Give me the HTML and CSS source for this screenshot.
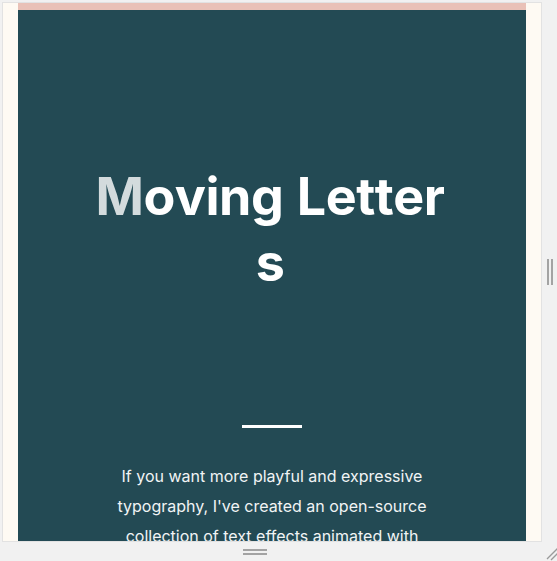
FILE: index.html
```html
<!DOCTYPE html>
<html lang="en">
<head>
<meta charset="utf-8">
<title>Moving Letters</title>
<link rel="stylesheet" href="styles.css">
</head>
<body>
<div class="shell">
  <div class="frame">
    <section class="panel">
      <h1 class="title"><span class="ch dim">M</span><span class="ch">o</span><span class="ch">v</span><span class="ch">i</span><span class="ch">n</span><span class="ch">g</span><span class="ch sp"> </span><span class="ch">L</span><span class="ch">e</span><span class="ch">t</span><span class="ch">t</span><span class="ch">e</span><span class="ch">r</span><span class="ch">s</span></h1>
      <hr class="rule">
      <p class="lead">If you want more playful and expressive typography, I've created an open-source collection of text effects animated with anime.js.</p>
    </section>
  </div>
  <div class="side">
    <span class="vgrip"></span>
  </div>
  <div class="bottom">
    <span class="hgrip"></span>
  </div>
  <div class="corner">
    <svg width="15" height="16" viewBox="0 0 15 16"><path d="M14 3 L3 14 M14 8 L7 15" stroke="#9a9a9a" stroke-width="1.3" fill="none"/></svg>
  </div>
</div>
</body>
</html>
```

FILE: styles.css
```css
html, body {
  margin: 0;
  padding: 0;
  background: #f1f1f1;
  width: 557px;
  height: 561px;
  overflow: hidden;
}
body {
  padding: 2px 0 0 2px;
  box-sizing: border-box;
  font-family: Inter, "Noto Sans", sans-serif;
}
.shell {
  display: grid;
  grid-template-columns: 540px 15px;
  grid-template-rows: 540px 19px;
}
.frame {
  box-sizing: border-box;
  border: 1px solid #e2e2e2;
  background: #fefaf3;
  padding: 0 15px;
  overflow: hidden;
}
.panel {
  background: #234a54;
  border-top: 7px solid #e9c1b7;
  min-height: 700px;
  padding-top: 154px;
  display: flex;
  flex-direction: column;
  align-items: center;
}
.title {
  margin: 0 4px 0 0;
  width: 362px;
  text-align: center;
  font-size: 52px;
  line-height: 66px;
  font-weight: 700;
  color: #ffffff;
  letter-spacing: -0.5px;
}
.ch {
  display: inline-block;
}
.ch.sp {
  width: 0.26em;
}
.dim {
  color: #d3dbdd;
}
.rule {
  margin: 129px 0 0;
  width: 60px;
  height: 3px;
  border: 0;
  background: #ffffff;
}
.lead {
  margin: 33px 0 0;
  width: 312px;
  text-align: center;
  font-size: 16px;
  line-height: 30px;
  color: #f1f4f5;
}
.side {
  display: flex;
  align-items: center;
  justify-content: center;
  padding-left: 1px;
}
.vgrip {
  width: 2px;
  height: 26px;
  border-left: 2px solid #a3a3a3;
  border-right: 2px solid #a3a3a3;
}
.bottom {
  display: flex;
  align-items: center;
  padding-left: 241px;
}
.hgrip {
  width: 24px;
  height: 2px;
  border-top: 2px solid #a3a3a3;
  border-bottom: 2px solid #a3a3a3;
}
.corner {
  display: flex;
  align-items: flex-end;
  justify-content: flex-end;
  margin-right: -2px;
}
.corner svg {
  display: block;
}
```
